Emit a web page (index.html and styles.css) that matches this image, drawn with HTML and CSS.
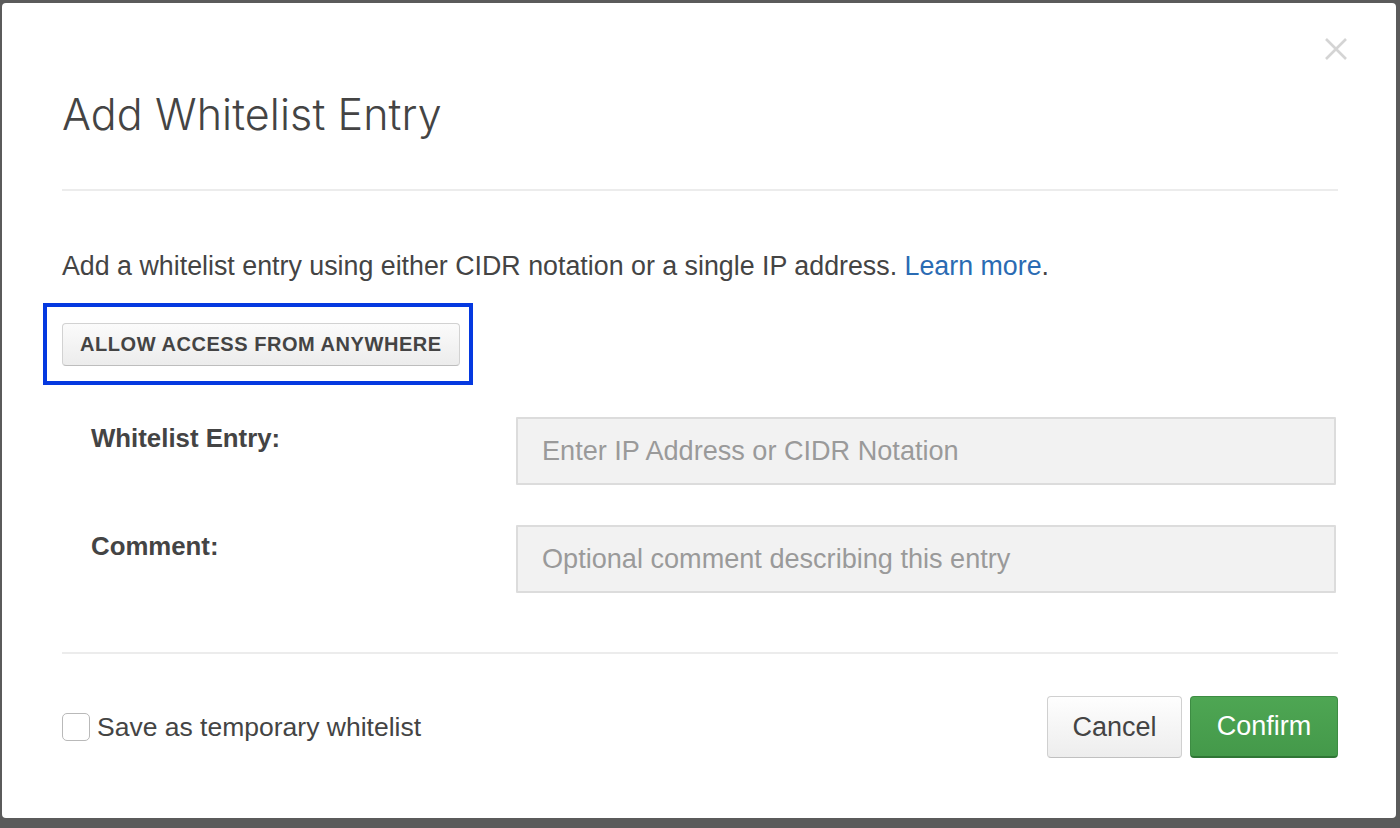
FILE: index.html
```html
<!DOCTYPE html>
<html lang="en">
<head>
    <meta charset="UTF-8">
    <title>Add Whitelist Entry</title>
    <link rel="stylesheet" href="styles.css">
</head>
<body>
    <div class="modal">
        <button class="close-btn" aria-label="Close">
            <svg width="24" height="24" viewBox="0 0 24 24">
                <path d="M2 2 L22 22 M22 2 L2 22" stroke="#d4d4d4" stroke-width="2.6" fill="none"/>
            </svg>
        </button>
        <div class="modal-body">
            <div class="modal-header">
                <h1 class="modal-title">Add Whitelist Entry</h1>
            </div>

            <div class="modal-section">
                <p class="intro">Add a whitelist entry using either CIDR notation or a single IP address. <a href="#">Learn more</a>.</p>

                <div class="highlight">
                    <button class="btn-small">Allow Access From Anywhere</button>
                </div>

                <div class="form-row">
                    <label class="form-label" for="entry">Whitelist Entry:</label>
                    <input class="form-input" type="text" id="entry" placeholder="Enter IP Address or CIDR Notation">
                </div>
                <div class="form-row">
                    <label class="form-label" for="comment">Comment:</label>
                    <input class="form-input" type="text" id="comment" placeholder="Optional comment describing this entry">
                </div>
            </div>

            <div class="modal-footer">
                <label class="check">
                    <span class="check-box"></span>
                    Save as temporary whitelist
                </label>
                <div class="actions">
                    <button class="btn btn-default">Cancel</button>
                    <button class="btn btn-primary">Confirm</button>
                </div>
            </div>
        </div>
    </div>
</body>
</html>
```

FILE: styles.css
```css
html, body {
    margin: 0;
    height: 100%;
}

body {
    font-family: "Liberation Sans", Arial, sans-serif;
    background: #5b5b5b;
    color: #444;
    padding: 3px 4px 10px 2px;
    box-sizing: border-box;
}

.modal {
    position: relative;
    background: #fff;
    height: 815px;
    border-radius: 4px;
}

.close-btn {
    position: absolute;
    top: 34px;
    right: 48px;
    padding: 0;
    border: none;
    background: none;
    cursor: pointer;
}

.close-btn svg {
    display: block;
}

.modal-body {
    padding: 0 58px 0 60px;
}

.modal-header {
    padding-top: 83px;
    padding-bottom: 47px;
    border-bottom: 2px solid #ececec;
}

.modal-title {
    margin: 0;
    font-family: Inter, "Liberation Sans", sans-serif;
    font-weight: 300;
    font-size: 43px;
    line-height: 56px;
    color: #444;
    letter-spacing: 0.1px;
}

.modal-section {
    padding-top: 59px;
    padding-bottom: 59px;
    border-bottom: 2px solid #ececec;
}

.intro {
    margin: 0;
    font-size: 26.8px;
    line-height: 32px;
    color: #444;
}

.intro a {
    color: #2a6bb3;
    text-decoration: none;
}

.highlight {
    display: inline-block;
    margin: 21px 0 32px -19px;
    padding: 16px 9px 15px 15px;
    border: 4px solid #0539e0;
}

.btn-small {
    display: block;
    height: 43px;
    padding: 0 17px;
    font-family: "Liberation Sans", Arial, sans-serif;
    font-size: 20px;
    font-weight: bold;
    text-transform: uppercase;
    letter-spacing: 0.55px;
    color: #444;
    background: linear-gradient(#fbfbfb, #ececec);
    border: 1px solid #d2d2d2;
    border-bottom-color: #bdbdbd;
    border-radius: 4px;
}

.form-row {
    display: flex;
    align-items: flex-start;
    margin-bottom: 40px;
}

.form-row:last-child {
    margin-bottom: 0;
}

.form-label {
    width: 425px;
    padding-left: 29px;
    padding-top: 5px;
    font-size: 25.8px;
    font-weight: bold;
    line-height: 32px;
    color: #444;
}

.form-input {
    flex: 1;
    height: 68px;
    box-sizing: border-box;
    margin-right: 2px;
    padding: 0 24px;
    font-family: "Liberation Sans", Arial, sans-serif;
    font-size: 27.1px;
    background: #f2f2f2;
    border: 2px solid #dcdcdc;
    border-radius: 1px;
    color: #444;
    outline: none;
}

.form-input::placeholder {
    color: #9a9a9a;
}

.modal-footer {
    display: flex;
    justify-content: space-between;
    align-items: center;
    padding-top: 42px;
}

.check {
    display: flex;
    align-items: center;
    gap: 7px;
    font-size: 26.5px;
    color: #444;
}

.check-box {
    width: 26px;
    height: 26px;
    border: 1.5px solid #b9b9b9;
    border-radius: 5px;
    background: #fff;
}

.actions {
    display: flex;
    gap: 8px;
}

.btn {
    height: 62px;
    font-family: "Liberation Sans", Arial, sans-serif;
    font-size: 27px;
    border-radius: 4px;
    cursor: pointer;
}

.btn-default {
    width: 135px;
    color: #444;
    background: linear-gradient(#fefefe, #ededed);
    border: 1px solid #d0d0d0;
    border-bottom-color: #c0c0c0;
}

.btn-primary {
    width: 148px;
    color: #fff;
    background: linear-gradient(#4ea653, #44994a);
    border: 1px solid #3d8c43;
    border-bottom: 2px solid #2f7635;
}
```
